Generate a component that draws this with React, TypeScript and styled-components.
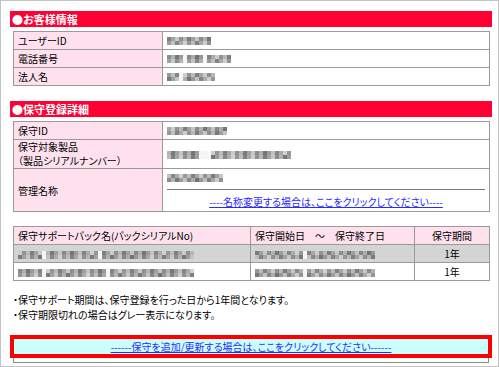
import styled, { createGlobalStyle } from "styled-components";

const GlobalStyle = createGlobalStyle`
  html, body {
    margin: 0;
    padding: 0;
    background: #ffffff;
  }
  body {
    font-family: "Noto Sans CJK JP", "Noto Sans", sans-serif;
    font-size: 10px;
    line-height: 14px;
    font-feature-settings: "palt";
    color: #000;
  }
`;

type MosaicProps = { cells: number[]; cols: number };

// grey pixelated blocks standing in for the blurred customer data
function Mosaic({ cells, cols }: MosaicProps) {
  return (
    <MosaicGrid $cols={cols}>
      {cells.map((v, i) => (
        <MosaicCell key={i} style={{ background: `rgb(${v},${v},${v})` }} />
      ))}
    </MosaicGrid>
  );
}

const seq = (n: number, seed: number, gaps: number[] = []) =>
  Array.from({ length: n }, (_, i) => {
    if (gaps.includes(i % (n / 2))) return 245;
    return 115 + ((i * 37 + seed * 13) % 95);
  });

export default function App() {
  return (
    <Frame>
      <GlobalStyle />
      <SectionHeader>●お客様情報</SectionHeader>
      <InfoTable>
        <tbody>
          <tr>
            <Label>ユーザーID</Label>
            <Value><Mosaic cols={11} cells={seq(22, 1)} /></Value>
          </tr>
          <tr>
            <Label>電話番号</Label>
            <Value><Mosaic cols={16} cells={seq(32, 2, [4, 9])} /></Value>
          </tr>
          <tr>
            <Label>法人名</Label>
            <Value><Mosaic cols={12} cells={seq(24, 3, [3])} /></Value>
          </tr>
        </tbody>
      </InfoTable>

      <SectionHeader $gap>●保守登録詳細</SectionHeader>
      <InfoTable>
        <tbody>
          <tr>
            <Label>保守ID</Label>
            <Value><Mosaic cols={15} cells={seq(30, 4)} /></Value>
          </tr>
          <tr>
            <Label $tall>
              保守対象製品
              <br />
              （製品シリアルナンバー）
            </Label>
            <Value><Mosaic cols={31} cells={seq(62, 5, [8, 9, 10])} /></Value>
          </tr>
          <tr>
            <Label>管理名称</Label>
            <NameCell>
              <NameValue><Mosaic cols={14} cells={seq(28, 6)} /></NameValue>
              <Rule />
              <LinkRow>
                <TextLink href="#">----名称変更する場合は、ここをクリックしてください----</TextLink>
              </LinkRow>
            </NameCell>
          </tr>
        </tbody>
      </InfoTable>

      <PackTable>
        <thead>
          <tr>
            <Head>保守サポートパック名(パックシリアルNo)</Head>
            <Head>保守開始日　～　保守終了日</Head>
            <Head $center>保守期間</Head>
          </tr>
        </thead>
        <tbody>
          <PackRow $expired>
            <PackCell><Mosaic cols={44} cells={seq(88, 7, [6, 20])} /></PackCell>
            <PackCell><Mosaic cols={30} cells={seq(60, 8, [12])} /></PackCell>
            <PackCell $center>1年</PackCell>
          </PackRow>
          <PackRow>
            <PackCell><Mosaic cols={44} cells={seq(88, 9, [6, 22])} /></PackCell>
            <PackCell><Mosaic cols={30} cells={seq(60, 10, [12])} /></PackCell>
            <PackCell $center>1年</PackCell>
          </PackRow>
        </tbody>
      </PackTable>

      <Notes>
        <li>・保守サポート期間は、保守登録を行った日から1年間となります。</li>
        <li>・保守期限切れの場合はグレー表示になります。</li>
      </Notes>

      <AddBox>
        <TextLink href="#">------保守を追加/更新する場合は、ここをクリックしてください------</TextLink>
      </AddBox>
      <AddShadow />
    </Frame>
  );
}

const Frame = styled.div`
  box-sizing: border-box;
  width: 499px;
  height: 367px;
  border: 1px solid #c4c4c4;
  padding: 10px 6px 0 9px;
  display: flex;
  flex-direction: column;
`;

const SectionHeader = styled.div<{ $gap?: boolean }>`
  height: 16px;
  line-height: 16px;
  background: #ff0033;
  color: #ffffff;
  font-weight: bold;
  font-size: 11px;
  padding-left: 2px;
  margin-top: ${(p) => (p.$gap ? "15px" : "0")};
`;

const InfoTable = styled.table`
  border-collapse: collapse;
  margin: 4px 2px 0 3px;
  width: 477px;
  border: 1px solid #8a8a8a;
`;

const Label = styled.td<{ $tall?: boolean }>`
  width: 140px;
  height: 17px;
  padding: 0 4px;
  background: #ffe1ee;
  border: 1px solid #9a9a9a;
  line-height: ${(p) => (p.$tall ? "14px" : "17px")};
  white-space: nowrap;
`;

const Value = styled.td`
  border: 1px solid #9a9a9a;
  padding: 0 4px;
  height: 17px;
  line-height: 8px;
`;

const NameCell = styled.td`
  border: 1px solid #9a9a9a;
  padding: 0;
  height: 41px;
`;

const NameValue = styled.div`
  padding: 4px 4px 7px;
  line-height: 8px;
`;

const Rule = styled.div`
  margin: 0 4px 0 4px;
  border-top: 1px solid #777;
`;

const LinkRow = styled.div`
  text-align: center;
  padding: 5px 0 2px;
  line-height: 14px;
`;

const TextLink = styled.a`
  color: #2a2aff;
  text-decoration: underline;
  text-underline-offset: 1px;
`;

const MosaicGrid = styled.span<{ $cols: number }>`
  display: inline-grid;
  grid-template-columns: repeat(${(p) => p.$cols}, 4px);
  grid-auto-rows: 4px;
  vertical-align: middle;
  filter: blur(0.7px);
`;

const MosaicCell = styled.span`
  display: block;
`;

const PackTable = styled.table`
  border-collapse: collapse;
  margin: 14px 2px 0 3px;
  width: 477px;
  border: 1px solid #8a8a8a;
`;

const Head = styled.th<{ $center?: boolean }>`
  font-weight: normal;
  text-align: ${(p) => (p.$center ? "center" : "left")};
  background: #ffe1ee;
  border: 1px solid #9a9a9a;
  height: 17px;
  padding: 0 4px;
  white-space: nowrap;
  &:first-child { width: 228px; }
  &:last-child { width: 66px; }
`;

const PackRow = styled.tr<{ $expired?: boolean }>`
  background: ${(p) => (p.$expired ? "#d4d4d4" : "#ffffff")};
`;

const PackCell = styled.td<{ $center?: boolean }>`
  border: 1px solid #9a9a9a;
  height: 17px;
  padding: 0 4px;
  text-align: ${(p) => (p.$center ? "center" : "left")};
`;

const Notes = styled.ul`
  list-style: none;
  margin: 11px 0 0 3px;
  padding: 0;
  line-height: 15px;
`;

const AddBox = styled.div`
  margin-top: 13px;
  border: 4px solid #ff0000;
  background: #ccffff;
  height: 15px;
  line-height: 15px;
  text-align: center;
`;

const AddShadow = styled.div`
  margin: 0 3px 0 3px;
  height: 4px;
  border: 1px solid #8a8a8a;
  border-top: none;
`;
